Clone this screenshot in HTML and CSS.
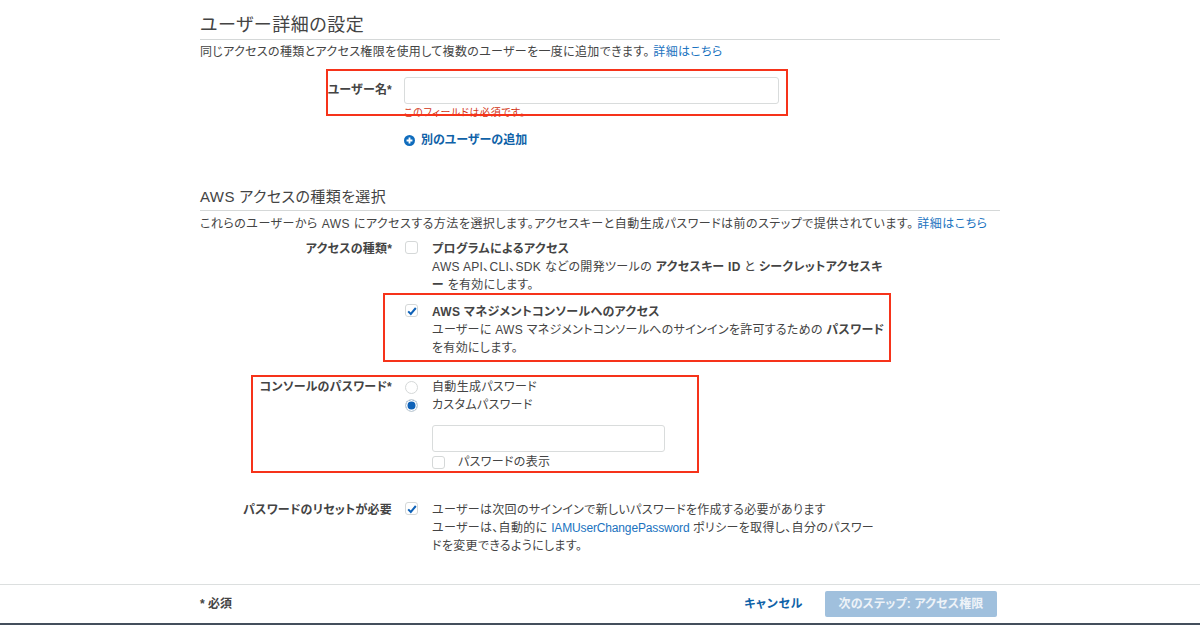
FILE: index.html
```html
<!DOCTYPE html>
<html lang="ja">
<head>
<meta charset="utf-8">
<title>ユーザー詳細の設定</title>
<link rel="stylesheet" href="styles.css">
</head>
<body>
<main class="content">
  <section class="section-first">
    <h2 class="title">ユーザー詳細の設定</h2>
    <p class="desc">同じアクセスの種類とアクセス権限を使用して複数のユーザーを一度に追加できます。 <a class="link" href="#">詳細はこちら</a></p>
    <div class="row row-user">
      <div class="label">ユーザー名*</div>
      <div class="control">
        <div class="input input-user"></div>
        <div class="error">このフィールドは必須です。</div>
      </div>
    </div>
    <div class="row row-add">
      <div class="label"></div>
      <a class="add" href="#">
        <svg class="add-icon" viewBox="0 0 12 12" width="11" height="11"><circle cx="6" cy="6" r="6" fill="#0f6cbd"/><path d="M6 2.8v6.4M2.8 6h6.4" stroke="#fff" stroke-width="2"/></svg>
        別のユーザーの追加
      </a>
    </div>
  </section>

  <section class="section-second">
    <h3 class="subtitle">AWS アクセスの種類を選択</h3>
    <p class="desc desc-two">これらのユーザーから AWS にアクセスする方法を選択します。アクセスキーと自動生成パスワードは前のステップで提供されています。 <a class="link" href="#">詳細はこちら</a></p>

    <div class="row row-type">
      <div class="label">アクセスの種類*</div>
      <div class="box"></div>
      <div class="text">
        <b>プログラムによるアクセス</b><br>
        AWS API、CLI、SDK などの開発ツールの <b>アクセスキー ID</b> と <b>シークレットアクセスキ<br>ー</b> を有効にします。
      </div>
    </div>
    <div class="row row-console">
      <div class="label"></div>
      <div class="box box-on"><svg viewBox="0 0 12 12" width="12" height="12"><path d="M2.2 6.4l2.6 2.6 5-6" fill="none" stroke="#0f62b8" stroke-width="2"/></svg></div>
      <div class="text text-tight">
        <b>AWS マネジメントコンソールへのアクセス</b><br>
        ユーザーに AWS マネジメントコンソールへのサインインを許可するための <b>パスワード</b><br>を有効にします。
      </div>
    </div>

    <div class="row row-password">
      <div class="label">コンソールのパスワード*</div>
      <div class="control">
        <div class="radio-line"><span class="radio"></span><span class="radio-text">自動生成パスワード</span></div>
        <div class="radio-line"><span class="radio radio-on"></span><span class="radio-text">カスタムパスワード</span></div>
        <div class="input input-pass"></div>
        <div class="show"><span class="box box-show"></span><span>パスワードの表示</span></div>
      </div>
    </div>

    <div class="row row-reset">
      <div class="label">パスワードのリセットが必要</div>
      <div class="box box-on"><svg viewBox="0 0 12 12" width="12" height="12"><path d="M2.2 6.4l2.6 2.6 5-6" fill="none" stroke="#0f62b8" stroke-width="2"/></svg></div>
      <div class="text">
        ユーザーは次回のサインインで新しいパスワードを作成する必要があります<br>
        ユーザーは、自動的に <a class="link link-inline" href="#">IAMUserChangePassword</a> ポリシーを取得し、自分のパスワー<br>ドを変更できるようにします。
      </div>
    </div>
  </section>
</main>

<footer class="footer">
  <div class="footer-inner">
    <span class="required">* 必須</span>
    <div class="actions">
      <a class="cancel" href="#">キャンセル</a>
      <span class="next">次のステップ: アクセス権限</span>
    </div>
  </div>
</footer>

<div class="mark mark-user"></div>
<div class="mark mark-console"></div>
<div class="mark mark-password"></div>
</body>
</html>
```

FILE: styles.css
```css
* { box-sizing: border-box; }
html, body { margin: 0; height: 625px; overflow: hidden; background: #fff; }
body {
  position: relative;
  font-family: "Liberation Sans", "Noto Sans CJK JP", sans-serif;
  font-size: 12px;
  line-height: 18px;
  color: #444;
  font-feature-settings: "palt";
  letter-spacing: 0.33px;
}
.content { width: 800px; margin: 0 auto; height: 584px; }
.title {
  margin: 0;
  height: 40px;
  padding-top: 12px;
  font-size: 18px;
  line-height: 26px;
  font-weight: 400;
  letter-spacing: 0.55px;
  border-bottom: 1px solid #d5d8d8;
}
.subtitle {
  margin: 0;
  height: 27px;
  padding-top: 2px;
  font-size: 15px;
  line-height: 22px;
  font-weight: 400;
  letter-spacing: 0.4px;
  border-bottom: 1px solid #d5d8d8;
}
.desc { margin: 3px 0 0; white-space: nowrap; }
.link { color: #1a73c0; text-decoration: none; }
.link-inline { letter-spacing: -0.15px; }
.row { display: flex; }
.label {
  flex: 0 0 192px;
  margin-right: 12px;
  text-align: right;
  font-weight: 700;
  letter-spacing: 0.2px;
}
.text { margin-left: 14px; white-space: nowrap; }
.text-tight { letter-spacing: 0.29px; }
.control { flex: 1; }
.input {
  height: 27px;
  border: 1px solid #d9dcdc;
  border-radius: 3px;
  background: #fff;
}
.input-user { width: 375px; margin-top: -1px; }
.error { color: #d13212; font-size: 10px; line-height: 14px; margin-top: 2px; letter-spacing: 0.6px; }
.row-user { margin-top: 17px; height: 50px; }
.row-user .label { line-height: 24px; }
.row-add { margin-top: 3px; }
.add {
  display: flex;
  align-items: center;
  gap: 6px;
  color: #0f62a8;
  font-weight: 700;
  letter-spacing: 0;
  text-decoration: none;
}
.add-icon { flex: none; }
.section-second { margin-top: 35px; }
.desc-two { margin-top: 4px; letter-spacing: 0.48px; }
.box {
  flex: none;
  width: 13px;
  height: 13px;
  margin: 1px 0 0 1px;
  border: 1px solid #d5d8d8;
  border-radius: 3px;
  background: #fff;
  display: flex;
  align-items: center;
  justify-content: center;
}
.box svg { flex: none; }
.row-type { margin-top: 7px; }
.row-console { margin-top: 9px; }
.row-password { margin-top: 21px; }
.row-reset { margin-top: 30px; }
.radio-line { display: flex; align-items: center; height: 18px; }
.radio {
  flex: none;
  width: 13px;
  height: 13px;
  margin-left: 1px;
  border: 1px solid #d5d8d8;
  border-radius: 50%;
  background: #fff;
}
.radio-on { background: #0f62b8; box-shadow: inset 0 0 0 1.5px #fff; }
.radio-text { margin-left: 14px; }
.input-pass { width: 233px; margin: 11px 0 0 28px; }
.show { display: flex; align-items: center; margin: 1px 0 0 28px; gap: 13px; height: 18px; }
.box-show { margin: 0; }
.footer { height: 41px; border-top: 1px solid #dcdfdf; border-bottom: 2px solid #444f5c; }
.footer-inner {
  width: 800px;
  height: 38px;
  margin: 0 auto;
  display: flex;
  align-items: center;
  justify-content: space-between;
}
.required { font-weight: 700; letter-spacing: 0; }
.actions { display: flex; align-items: center; gap: 22px; padding-right: 3px; }
.cancel { color: #0f62a8; font-weight: 700; letter-spacing: 0.7px; text-decoration: none; }
.next {
  display: block;
  width: 172px;
  height: 26px;
  line-height: 26px;
  text-align: center;
  color: #eef3f8;
  font-weight: 700;
  letter-spacing: 0.15px;
  background: #a0c0dd;
  border-radius: 2px;
}
.mark { position: absolute; border: 2px solid #f6331a; }
.mark-user { left: 326px; top: 69px; width: 462px; height: 47px; }
.mark-console { left: 383px; top: 293px; width: 508px; height: 69px; }
.mark-password { left: 251px; top: 375px; width: 448px; height: 98px; }
```
